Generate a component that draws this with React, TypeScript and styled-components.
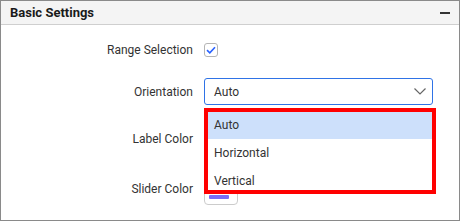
import React from "react";
import styled, { createGlobalStyle } from "styled-components";

const GlobalStyle = createGlobalStyle`
    html, body {
        margin: 0;
        padding: 0;
        background: #ffffff;
    }
    body {
        font-family: Roboto, "Liberation Sans", sans-serif;
    }
`;

const Panel = styled.div`
    position: relative;
    box-sizing: border-box;
    width: 460px;
    height: 221px;
    border: 1px solid #8a8a8a;
    background: #ffffff;
    overflow: hidden;
`;

const Header = styled.div`
    display: flex;
    align-items: center;
    justify-content: space-between;
    height: 23px;
    padding: 0 9px 0 9px;
    background: #f4f4f4;
    border-bottom: 1px solid #cfcfcf;
`;

const Title = styled.div`
    font-size: 13px;
    font-weight: 700;
    color: #1a1a1a;
`;

const Minus = styled.div`
    width: 10px;
    height: 2px;
    background: #333333;
`;

const Body = styled.div`
    display: flex;
    flex-direction: column;
    padding-top: 11px;
`;

const Row = styled.div<{ $h: number; $mt?: number }>`
    display: grid;
    grid-template-columns: 192px 1fr;
    column-gap: 11px;
    align-items: center;
    height: ${(p) => p.$h}px;
    margin-top: ${(p) => p.$mt ?? 0}px;
`;

const Label = styled.div`
    text-align: right;
    font-size: 12px;
    color: #333333;
`;

const Checkbox = styled.div`
    display: flex;
    align-items: center;
    justify-content: center;
    box-sizing: border-box;
    width: 14px;
    height: 14px;
    border: 1px solid #b5b5b5;
    border-radius: 3px;
    background: #ffffff;
`;

const Select = styled.div`
    display: flex;
    align-items: center;
    justify-content: space-between;
    box-sizing: border-box;
    width: 229px;
    height: 27px;
    padding: 0 6px 0 9px;
    border: 1px solid #2f73e6;
    border-radius: 3px;
    font-size: 12px;
    color: #333333;
`;

const Swatch = styled.div`
    display: flex;
    align-items: flex-end;
    box-sizing: border-box;
    width: 34px;
    height: 32px;
    padding: 0 0 5px 4px;
    border: 1px solid #cccccc;
    border-radius: 4px;
    background: #ffffff;
`;

const SwatchBar = styled.div<{ $color: string }>`
    width: 20px;
    height: 4px;
    border-radius: 1px;
    background: ${(p) => p.$color};
`;

const Popup = styled.div`
    position: absolute;
    left: 203px;
    top: 107px;
    box-sizing: border-box;
    width: 232px;
    height: 86px;
    border: 4px solid #ff0000;
    background: #ffffff;
    overflow: hidden;
`;

const List = styled.div`
    display: flex;
    flex-direction: column;
    margin-top: -1px;
`;

const Item = styled.div<{ $active?: boolean }>`
    display: flex;
    align-items: center;
    height: 28px;
    padding-left: 6px;
    font-size: 12px;
    color: #333333;
    background: ${(p) => (p.$active ? "#cde0fb" : "#ffffff")};
`;

const App = () => {
    return (
        <>
            <GlobalStyle />
            <Panel>
                <Header>
                    <Title>Basic Settings</Title>
                    <Minus />
                </Header>
                <Body>
                    <Row $h={28}>
                        <Label>Range Selection</Label>
                        <Checkbox>
                            <svg width="10" height="8" viewBox="0 0 10 8">
                                <path
                                    d="M1 4.2 L3.8 6.8 L9 1.2"
                                    fill="none"
                                    stroke="#2962ff"
                                    strokeWidth="1.6"
                                />
                            </svg>
                        </Checkbox>
                    </Row>
                    <Row $h={27} $mt={14}>
                        <Label>Orientation</Label>
                        <Select>
                            <span>Auto</span>
                            <svg width="12" height="7" viewBox="0 0 12 7">
                                <path
                                    d="M0.5 0.5 L6 6 L11.5 0.5"
                                    fill="none"
                                    stroke="#666666"
                                    strokeWidth="1.2"
                                />
                            </svg>
                        </Select>
                    </Row>
                    <Row $h={32} $mt={18}>
                        <Label>Label Color</Label>
                        <Swatch>
                            <SwatchBar $color="#333333" />
                        </Swatch>
                    </Row>
                    <Row $h={32} $mt={18}>
                        <Label>Slider Color</Label>
                        <Swatch>
                            <SwatchBar $color="#7b6cf6" />
                        </Swatch>
                    </Row>
                </Body>
                <Popup>
                    <List>
                        <Item $active>Auto</Item>
                        <Item>Horizontal</Item>
                        <Item>Vertical</Item>
                    </List>
                </Popup>
            </Panel>
        </>
    );
};

export default App;
